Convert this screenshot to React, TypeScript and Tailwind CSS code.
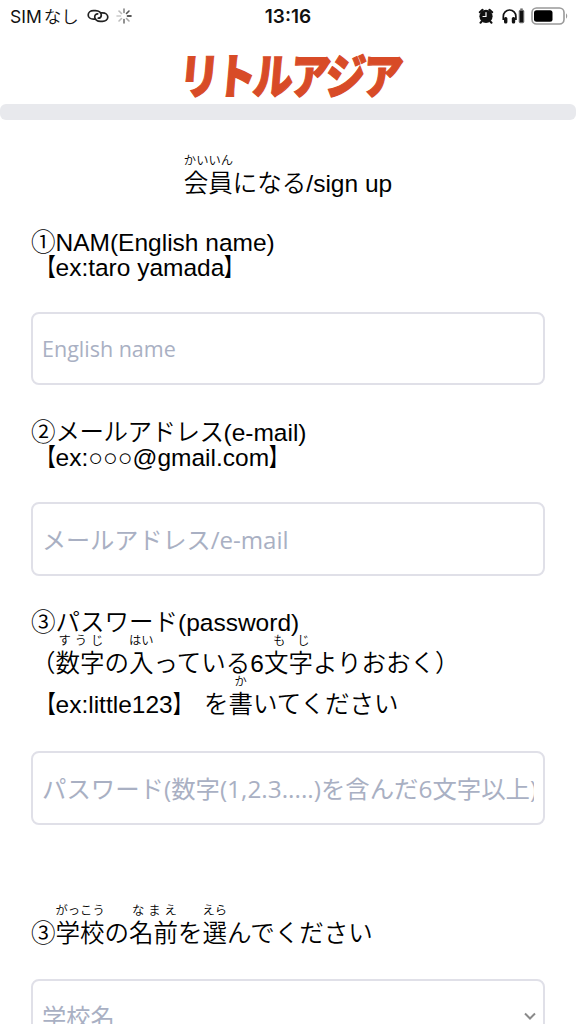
import { ReactNode } from "react";

interface FuriProps {
  rt: string;
  // letter spacing for the reading, so it spreads over the kanji
  spread?: string;
  children: ReactNode;
}

function Furi({ rt, spread = "", children }: FuriProps) {
  return (
    <span className="relative inline-block leading-[25px]">
      <span
        className={`absolute inset-x-0 -top-[16px] text-center whitespace-nowrap text-[12.3px] leading-[12px] ${spread}`}
      >
        {rt}
      </span>
      {children}
    </span>
  );
}

// 【 】 with a slimmer shape than the font gives
function Example({ children }: { children: ReactNode }) {
  return (
    <>
      <span className="inline-block origin-right scale-x-75 font-bold">【</span>
      {children}
      <span className="inline-block origin-left scale-x-75 font-bold">】</span>
    </>
  );
}

interface FieldProps {
  placeholder: string;
  className?: string;
}

function Field({ placeholder, className = "" }: FieldProps) {
  return (
    <input
      type="text"
      placeholder={placeholder}
      className={`block w-full rounded-lg border-2 border-[#e0e0e8] bg-white pl-[9px] pr-[9px] font-normal text-[#a9b0c3] placeholder:text-[#a9b0c3] font-['Open_Sans','Noto_Sans_CJK_JP',sans-serif] ${className}`}
    />
  );
}

function StatusBar() {
  return (
    <div className="grid h-8 shrink-0 grid-cols-3 items-center text-[#111] font-['Inter','Noto_Sans_CJK_JP',sans-serif]">
      <div className="flex items-center pl-[10px]">
        <span className="flex gap-[2px] whitespace-nowrap text-[17.5px]">
          <span className="font-normal">SIM</span>
          <span className="font-[350]">なし</span>
        </span>
        <svg className="ml-2 h-[14px] w-[22px]" viewBox="0 0 22 14" fill="none" stroke="#222" strokeWidth="1.7" strokeLinecap="round">
          <path d="M8.500 10.200H6.500C3.500 10.200 1.200 8.300 1.200 5.900S3.500 1.600 6.500 1.600H8.500C12 1.600 14.300 3.700 14.300 5.900C14.300 7.600 13.200 9.200 11.300 9.200" />
          <path d="M13.500 3.800H15.500C18.500 3.800 20.800 5.700 20.800 8.100S18.500 12.400 15.500 12.400H13.500C10 12.400 7.700 10.300 7.700 8.100C7.700 6.400 8.800 4.800 10.700 4.800" />
        </svg>
        <svg className="ml-[7px] h-4 w-4 shrink-0" viewBox="0 0 16 16" strokeWidth="1.6" strokeLinecap="round">
          <path d="M8 1v3.500" stroke="#888" />
          <path d="M13 3l-2.500 2.500" stroke="#555" />
          <path d="M15 8h-3.500" stroke="#222" />
          <path d="M13 13l-2.500-2.500" stroke="#aaa" />
          <path d="M8 15v-3.500" stroke="#777" />
          <path d="M3 13l2.500-2.500" stroke="#bbb" />
          <path d="M1 8h3.500" stroke="#ccc" />
          <path d="M3 3l2.500 2.500" stroke="#bbb" />
        </svg>
      </div>
      <div className="text-center text-[19px] font-semibold">13:16</div>
      <div className="flex items-center justify-end pr-[8px]">
        <svg className="h-4 w-4" viewBox="0 0 16 16">
          <circle cx="8" cy="8.3" r="6.600" fill="#111" />
          <path d="M1.800 4.300l2.700-2.500M14.200 4.300l-2.700-2.500M3.700 13.500l-1.200 1.300M12.300 13.500l1.200 1.300" stroke="#111" strokeWidth="2" strokeLinecap="round" />
          <path d="M8 4.500v4H5" stroke="#fff" strokeWidth="1.2" fill="none" strokeLinecap="round" />
        </svg>
        <svg className="ml-2 h-4 w-[23px]" viewBox="0 0 23 16">
          <path d="M1.300 12V8.500a6.300 6.500 0 0 1 12.600 0V12" stroke="#111" strokeWidth="1.7" fill="none" />
          <rect x="2" y="9" width="3.4" height="6.4" rx="1.5" fill="#111" />
          <rect x="9.8" y="9" width="3.4" height="6.4" rx="1.5" fill="#111" />
          <rect x="17.2" y="2.2" width="4.6" height="12.6" rx="1" fill="#111" stroke="#777" />
          <rect x="18.3" y="0.5" width="2.4" height="1.3" fill="#555" />
        </svg>
        <svg className="ml-[6px] h-[18px] w-[37px]" viewBox="0 0 37 18">
          <rect x="1" y="1" width="32" height="16" rx="4.5" fill="none" stroke="#999" strokeWidth="1.6" />
          <rect x="3" y="3.2" width="18.5" height="11.6" rx="2.5" fill="#000" />
          <path d="M35 6.500c1.600.6 1.600 4.400 0 5z" fill="#999" />
        </svg>
      </div>
    </div>
  );
}

export default function App() {
  return (
    <div className="flex h-[1024px] w-[576px] flex-col overflow-hidden bg-white text-[24.5px] font-[350] leading-[25px] text-black font-['Liberation_Sans','Noto_Sans_CJK_JP',sans-serif]">
      <StatusBar />
      <header className="flex h-[72px] shrink-0 items-center justify-center">
        <h1 className="-skew-x-6 scale-y-[1.2] whitespace-nowrap pl-[4px] pt-[9px] text-[40px] font-black leading-[50px] tracking-[-3px] text-[#d84b27] [-webkit-text-stroke:1px_#d84b27] font-['Noto_Sans_CJK_JP',sans-serif]">
          リトルアジア
        </h1>
      </header>
      <div className="h-4 shrink-0 rounded-md bg-[#e8e9ed]" />

      <main className="px-[31px]">
        <h2 className="mt-[51px] text-center font-[350]">
          <Furi rt="かいいん">会員</Furi>になる/sign up
        </h2>

        <div className="mt-[34px]">
          ①NAM(English name)
          <br />
          <Example>ex:taro yamada</Example>
        </div>
        <Field className="mt-8 h-[73px] text-[21.5px]" placeholder="English name" />

        <div className="mt-[35px]">
          ②<span className="tracking-[-0.5px]">メールアドレス</span>(e-mail)
          <br />
          <Example>ex:○○○@gmail.com</Example>
        </div>
        <Field className="mt-8 h-[74px] text-[24.1px]" placeholder="メールアドレス/e-mail" />

        <div className="mt-[34px]">③パスワード(password)</div>
        <div className="mt-2 whitespace-nowrap leading-[41px]">
          （<Furi rt="すうじ" spread="tracking-[4px] pl-[3px]">数字</Furi>の
          <Furi rt="はい">入</Furi>っている6
          <Furi rt="もじ" spread="tracking-[12px] pl-[9px]">文字</Furi>よりおおく）
          <br />
          <Example>ex:little123</Example> を<Furi rt="か">書</Furi>いてください
        </div>
        <Field className="mt-[26px] h-[74px] text-[24.4px]" placeholder="パスワード(数字(1,2.3.....)を含んだ6文字以上)" />

        <div className="mt-24">
          ③<Furi rt="がっこう">学校</Furi>の
          <Furi rt="なまえ" spread="tracking-[4px] pl-[3px]">名前</Furi>を
          <Furi rt="えら">選</Furi>んでください
        </div>
        <div className="mt-[33px] flex h-[74px] items-center justify-between rounded-lg border-2 border-[#e0e0e8] pl-[9px] pr-[5px] text-[24.3px] font-normal text-[#a9b0c3] font-['Open_Sans','Noto_Sans_CJK_JP',sans-serif]">
          <span>学校名</span>
          <svg className="h-3 w-4" viewBox="0 0 16 12" fill="none" stroke="#8a8a8a" strokeWidth="2">
            <path d="M3 3.500l5 5 5-5" />
          </svg>
        </div>
      </main>
    </div>
  );
}
